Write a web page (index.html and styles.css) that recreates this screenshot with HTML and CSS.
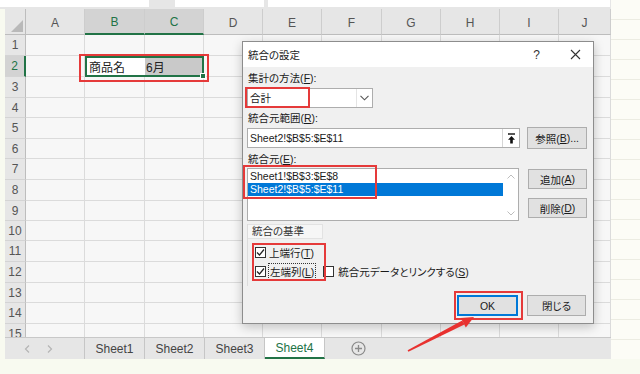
FILE: index.html
```html
<!DOCTYPE html>
<html lang="ja">
<head>
    <meta charset="UTF-8">
    <title>統合の設定</title>
    <link rel="stylesheet" href="styles.css">
</head>
<body>
<div class="page">
    <div class="excel">
        <div class="formula-bar">
            <div class="fbox name-box"></div>
            <div class="fbox mid-box"></div>
            <div class="fbox input-box"></div>
        </div>

        <div class="sheet">
            <div class="ch corner"></div><div class="ch">A</div><div class="ch on">B</div><div class="ch on">C</div><div class="ch">D</div><div class="ch">E</div><div class="ch">F</div><div class="ch">G</div><div class="ch">H</div><div class="ch">I</div><div class="ch">J</div>
            <div class="rh">1</div><div class="c"></div><div class="c"></div><div class="c"></div><div class="c"></div><div class="c"></div><div class="c"></div><div class="c"></div><div class="c"></div><div class="c"></div><div class="c"></div>
            <div class="rh on">2</div><div class="c"></div><div class="c active">商品名</div><div class="c range">6月<span class="handle"></span></div><div class="c"></div><div class="c"></div><div class="c"></div><div class="c"></div><div class="c"></div><div class="c"></div><div class="c"></div>
            <div class="rh">3</div><div class="c"></div><div class="c"></div><div class="c"></div><div class="c"></div><div class="c"></div><div class="c"></div><div class="c"></div><div class="c"></div><div class="c"></div><div class="c"></div>
            <div class="rh">4</div><div class="c"></div><div class="c"></div><div class="c"></div><div class="c"></div><div class="c"></div><div class="c"></div><div class="c"></div><div class="c"></div><div class="c"></div><div class="c"></div>
            <div class="rh">5</div><div class="c"></div><div class="c"></div><div class="c"></div><div class="c"></div><div class="c"></div><div class="c"></div><div class="c"></div><div class="c"></div><div class="c"></div><div class="c"></div>
            <div class="rh">6</div><div class="c"></div><div class="c"></div><div class="c"></div><div class="c"></div><div class="c"></div><div class="c"></div><div class="c"></div><div class="c"></div><div class="c"></div><div class="c"></div>
            <div class="rh">7</div><div class="c"></div><div class="c"></div><div class="c"></div><div class="c"></div><div class="c"></div><div class="c"></div><div class="c"></div><div class="c"></div><div class="c"></div><div class="c"></div>
            <div class="rh">8</div><div class="c"></div><div class="c"></div><div class="c"></div><div class="c"></div><div class="c"></div><div class="c"></div><div class="c"></div><div class="c"></div><div class="c"></div><div class="c"></div>
            <div class="rh">9</div><div class="c"></div><div class="c"></div><div class="c"></div><div class="c"></div><div class="c"></div><div class="c"></div><div class="c"></div><div class="c"></div><div class="c"></div><div class="c"></div>
            <div class="rh">10</div><div class="c"></div><div class="c"></div><div class="c"></div><div class="c"></div><div class="c"></div><div class="c"></div><div class="c"></div><div class="c"></div><div class="c"></div><div class="c"></div>
            <div class="rh">11</div><div class="c"></div><div class="c"></div><div class="c"></div><div class="c"></div><div class="c"></div><div class="c"></div><div class="c"></div><div class="c"></div><div class="c"></div><div class="c"></div>
            <div class="rh">12</div><div class="c"></div><div class="c"></div><div class="c"></div><div class="c"></div><div class="c"></div><div class="c"></div><div class="c"></div><div class="c"></div><div class="c"></div><div class="c"></div>
            <div class="rh">13</div><div class="c"></div><div class="c"></div><div class="c"></div><div class="c"></div><div class="c"></div><div class="c"></div><div class="c"></div><div class="c"></div><div class="c"></div><div class="c"></div>
            <div class="rh">14</div><div class="c"></div><div class="c"></div><div class="c"></div><div class="c"></div><div class="c"></div><div class="c"></div><div class="c"></div><div class="c"></div><div class="c"></div><div class="c"></div>
            <div class="rh">15</div><div class="c"></div><div class="c"></div><div class="c"></div><div class="c"></div><div class="c"></div><div class="c"></div><div class="c"></div><div class="c"></div><div class="c"></div><div class="c"></div>
        </div>

        <div class="tabbar">
            <div class="tab-nav">
                <svg width="6" height="8" viewBox="0 0 6 8"><path d="M5 0.5 L1.5 4 L5 7.5" fill="none" stroke="#b5b5b5" stroke-width="1.2"/></svg>
                <svg width="6" height="8" viewBox="0 0 6 8"><path d="M1 0.5 L4.5 4 L1 7.5" fill="none" stroke="#b5b5b5" stroke-width="1.2"/></svg>
            </div>
            <div class="tab">Sheet1</div>
            <div class="tab">Sheet2</div>
            <div class="tab">Sheet3</div>
            <div class="tab active">Sheet4</div>
            <div class="tab-add">
                <svg width="15" height="15" viewBox="0 0 15 15"><circle cx="7.5" cy="7.5" r="6.5" fill="none" stroke="#8a8a8a" stroke-width="1.2"/><path d="M7.5 4 V11 M4 7.5 H11" stroke="#8a8a8a" stroke-width="1.3"/></svg>
            </div>
        </div>
    </div>
    <div class="filler"></div>

    <!-- 統合の設定 dialog -->
    <div class="dialog">
        <div class="dlg-title">
            <span>統合の設定</span>
            <span class="help">?</span>
            <span class="close"><svg width="11" height="11" viewBox="0 0 11 11"><path d="M1 1 L10 10 M10 1 L1 10" stroke="#333" stroke-width="1.1"/></svg></span>
        </div>
        <div class="dlg-body">
            <div class="label first">集計の方法(<u>F</u>):</div>
            <div class="combo">
                <span class="combo-value">合計</span>
                <span class="combo-drop"><svg width="9" height="6" viewBox="0 0 9 6"><path d="M0.5 0.8 L4.5 4.8 L8.5 0.8" fill="none" stroke="#555" stroke-width="1.1"/></svg></span>
            </div>

            <div class="label">統合元範囲(<u>R</u>):</div>
            <div class="range-row">
                <div class="ref-input">
                    <span class="ref-text">Sheet2!$B$5:$E$11</span>
                    <span class="collapse"><svg width="9" height="11" viewBox="0 0 9 11"><path d="M1 1 H8" stroke="#111" stroke-width="1.4"/><path d="M4.5 3 L8 6.8 H5.8 V10.5 H3.2 V6.8 H1 Z" fill="#111"/></svg></span>
                </div>
                <button class="btn wide">参照(<u>B</u>)...</button>
            </div>

            <div class="label">統合元(<u>E</u>):</div>
            <div class="list-row">
                <div class="listbox">
                    <div class="items">
                        <div class="item">Sheet1!$B$3:$E$8</div>
                        <div class="item sel">Sheet2!$B$5:$E$11</div>
                    </div>
                    <div class="vscroll">
                        <svg width="8" height="5" viewBox="0 0 8 5"><path d="M0.5 4.5 L4 1 L7.5 4.5" fill="none" stroke="#bdbdbd" stroke-width="1"/></svg>
                        <svg width="8" height="5" viewBox="0 0 8 5"><path d="M0.5 0.5 L4 4 L7.5 0.5" fill="none" stroke="#bdbdbd" stroke-width="1"/></svg>
                    </div>
                </div>
                <div class="btn-col">
                    <button class="btn">追加(<u>A</u>)</button>
                    <button class="btn">削除(<u>D</u>)</button>
                </div>
            </div>

            <div class="group">
                <div class="group-title">統合の基準</div>
                <div class="chk-row">
                    <span class="chk">
                        <span class="box"><svg width="9" height="9" viewBox="0 0 9 9"><path d="M1 4.5 L3.5 7 L8 1.5" fill="none" stroke="#222" stroke-width="1.2"/></svg></span>
                        <span>上端行(<u>T</u>)</span>
                    </span>
                </div>
                <div class="chk-row">
                    <span class="chk">
                        <span class="box"><svg width="9" height="9" viewBox="0 0 9 9"><path d="M1 4.5 L3.5 7 L8 1.5" fill="none" stroke="#222" stroke-width="1.2"/></svg></span>
                        <span class="focus">左端列(<u>L</u>)</span>
                    </span>
                    <span class="chk link">
                        <span class="box"></span>
                        <span>統合元データとリンクする(<u>S</u>)</span>
                    </span>
                </div>
            </div>

            <div class="actions">
                <button class="btn ok">OK</button>
                <button class="btn">閉じる</button>
            </div>
        </div>
    </div>

    <!-- red annotations -->
    <div class="mark mark-cells"></div>
    <div class="mark mark-func"></div>
    <div class="mark mark-list"></div>
    <div class="mark mark-checks"></div>
    <div class="mark mark-ok"></div>
    <svg class="arrow" width="640" height="374" viewBox="0 0 640 374">
        <polygon points="407.6,350.3 408.4,351.7 464.4,324.6 462.2,320.4" fill="#e8312f"/>
        <polygon points="474,317 465.8,327.4 460.8,318" fill="#e8312f"/>
    </svg>
</div>
</body>
</html>
```

FILE: styles.css
```css
* {
    box-sizing: border-box;
}
body {
    margin: 0;
    width: 640px;
    height: 374px;
    overflow: hidden;
    background: #f8faf0;
    font-family: 'Liberation Sans', 'Noto Sans CJK JP', sans-serif;
    color: #222;
}
.page {
    position: relative;
    display: flex;
    height: 374px;
}
.excel {
    width: 611px;
    flex: none;
}
.filler {
    flex: 1;
    height: 359px;
    background: repeating-linear-gradient(to bottom, #fcfcf6 0, #fcfcf6 19px, #ececE2 19px, #ececE2 20px);
}

/* formula bar strip */
.formula-bar {
    height: 9px;
    background: #e6e6e6;
    display: flex;
}
.fbox {
    height: 7px;
    background: #fff;
}
.name-box {
    width: 149px;
    margin-right: 26px;
}
.mid-box {
    width: 89px;
    margin-right: 4px;
}
.input-box {
    flex: 1;
    margin-right: 1px;
}

/* grid */
.sheet {
    margin-left: 5px;
    display: grid;
    grid-template-columns: 21px 59px 60px 59px 59px 59px 60px 59px 59px 59px 52px;
    grid-template-rows: 26px 21px 21px 21px 20px 21px 20px 21px 21px 20px 20px 21px 21px 20px 21px 21px;
    height: 328px;
    overflow: hidden;
}
.ch {
    background: #e6e6e6;
    border-right: 1px solid #cdcdcd;
    border-bottom: 1px solid #bdbdbd;
    font-size: 12px;
    color: #555;
    display: flex;
    align-items: center;
    justify-content: center;
    padding-top: 2px;
}
.ch.on {
    background: #d3d3d3;
    color: #217346;
    border-bottom: 2px solid #217346;
}
.corner {
    position: relative;
    border-right: 1px solid #bdbdbd;
}
.corner::after {
    content: '';
    position: absolute;
    right: 2px;
    bottom: 2px;
    border-left: 12px solid transparent;
    border-bottom: 12px solid #b9b9b9;
}
.rh {
    background: #e6e6e6;
    border-right: 1px solid #bdbdbd;
    border-bottom: 1px solid #d4d4d4;
    font-size: 12px;
    color: #555;
    display: flex;
    align-items: center;
    justify-content: center;
}
.rh.on {
    background: #d3d3d3;
    color: #217346;
    border-right: 2px solid #217346;
}
.c {
    background: #f7f7f7;
    border-right: 1px solid #dbdbdb;
    border-bottom: 1px solid #dbdbdb;
    font-size: 12px;
    color: #222;
    display: flex;
    align-items: center;
}
.c.active {
    background: #fff;
    border: 2px solid #217346;
    border-right: none;
    padding-left: 2px;
}
.c.range {
    position: relative;
    background: #c9c9c9;
    border: 2px solid #217346;
    border-left: none;
    padding-left: 1px;
}
.handle {
    position: absolute;
    right: -4px;
    bottom: -4px;
    width: 6px;
    height: 6px;
    background: #217346;
    border: 1px solid #fff;
}

/* sheet tabs */
.tabbar {
    margin-left: 5px;
    height: 22px;
    background: #e6e6e6;
    border-top: 1px solid #c8c8c8;
    display: flex;
    font-size: 12px;
    color: #444;
}
.tab-nav {
    width: 80px;
    display: flex;
    align-items: center;
    gap: 17px;
    padding-left: 19px;
    border-right: 1px solid #c6c6c6;
}
.tab {
    width: 60px;
    display: flex;
    align-items: center;
    justify-content: center;
    border-right: 1px solid #c6c6c6;
}
.tab:first-of-type {
    width: 61px;
}
.tab.active {
    background: #fff;
    color: #217346;
    border-bottom: 2px solid #217346;
}
.tab-add {
    margin-left: 26px;
    display: flex;
    align-items: center;
}

/* dialog */
.dialog {
    position: absolute;
    left: 242px;
    top: 41px;
    width: 352px;
    height: 283px;
    background: #f0f0f0;
    border: 1px solid #8d8d8d;
    box-shadow: 0 3px 10px rgba(0, 0, 0, 0.22);
    font-size: 10.5px;
    font-feature-settings: "palt";
    color: #1a1a1a;
    display: flex;
    flex-direction: column;
}
.dlg-title {
    height: 25px;
    background: #fff;
    display: flex;
    align-items: center;
    padding-left: 5px;
}
.help {
    margin-left: auto;
    font-size: 12px;
    color: #333;
}
.close {
    margin-left: 30px;
    margin-right: 12px;
    display: flex;
}
.dlg-body {
    flex: 1;
    display: flex;
    flex-direction: column;
    padding: 4px 6px 7px 4px;
}
.label {
    line-height: 14px;
    padding-left: 1px;
    margin-top: 3px;
}
.label.first {
    margin-top: 0;
}
.combo {
    margin-top: 3px;
    width: 126px;
    height: 20px;
    background: #fff;
    border: 1px solid #adadad;
    display: flex;
}
.combo-value {
    flex: 1;
    line-height: 18px;
    padding-left: 2px;
}
.combo-drop {
    width: 16px;
    border-left: 1px solid #e4e4e4;
    display: flex;
    align-items: center;
    justify-content: center;
}
.range-row {
    margin-top: 2px;
    display: flex;
    align-items: center;
    gap: 7px;
}
.ref-input {
    width: 274px;
    height: 20px;
    background: #fff;
    border: 1px solid #adadad;
    display: flex;
    align-items: center;
}
.ref-text {
    flex: 1;
    padding-left: 2px;
}
.collapse {
    width: 17px;
    height: 18px;
    border-left: 1px solid #d6d6d6;
    display: flex;
    align-items: center;
    justify-content: center;
}
.btn {
    width: 59px;
    height: 20px;
    padding: 0;
    background: #e1e1e1;
    border: 1px solid #adadad;
    font: inherit;
    color: #1a1a1a;
    display: flex;
    align-items: center;
    justify-content: center;
}
.btn.wide {
    width: 60px;
    height: 22px;
}
.list-row {
    margin-top: 2px;
    display: flex;
    gap: 9px;
}
.listbox {
    width: 272px;
    height: 53px;
    background: #fff;
    border: 1px solid #adadad;
    display: flex;
}
.items {
    flex: 1;
    padding-top: 1px;
}
.item {
    height: 13px;
    line-height: 13px;
    padding-left: 2px;
}
.item.sel {
    background: #0078d7;
    color: #fff;
}
.vscroll {
    width: 15px;
    padding: 5px 0 4px;
    display: flex;
    flex-direction: column;
    justify-content: space-between;
    align-items: center;
}
.btn-col {
    padding-top: 1px;
    display: flex;
    flex-direction: column;
    gap: 9px;
}
.group {
    margin-top: 3px;
    align-self: flex-start;
    border-left: 1px solid #dcdcdc;
    padding-bottom: 6px;
    white-space: nowrap;
}
.group-title {
    width: 75px;
    line-height: 13px;
    padding-left: 4px;
    background: #f6f6f6;
    border: 1px solid #e2e2e2;
    border-left: none;
    color: #333;
}
.chk-row {
    margin-top: 5px;
    height: 17px;
    display: flex;
    align-items: center;
    gap: 8px;
    padding-left: 7px;
}
.chk-row + .chk-row {
    margin-top: 2px;
}
.chk {
    display: flex;
    align-items: center;
    gap: 3px;
}
.box {
    width: 11px;
    height: 11px;
    background: #fff;
    border: 1px solid #333;
    display: flex;
    align-items: center;
    justify-content: center;
}
.focus {
    outline: 1px dotted #333;
    padding: 0 1px;
}
.chk.link {
    gap: 4px;
}
.actions {
    margin-top: auto;
    display: flex;
    justify-content: flex-end;
    gap: 9px;
    padding-right: 1px;
}
.btn.ok {
    width: 61px;
    height: 21px;
    border: 1px solid #0078d7;
    box-shadow: inset 0 0 0 1px #0078d7;
}
.actions .btn {
    height: 21px;
}

/* red annotations */
.mark {
    position: absolute;
    border: 2px solid #e53a3a;
}
.mark-cells {
    left: 79px;
    top: 54px;
    width: 130px;
    height: 28px;
}
.mark-func {
    left: 245px;
    top: 87px;
    width: 65px;
    height: 21px;
}
.mark-list {
    left: 243px;
    top: 165px;
    width: 134px;
    height: 34px;
}
.mark-checks {
    left: 252px;
    top: 243px;
    width: 74px;
    height: 38px;
}
.mark-ok {
    left: 454px;
    top: 291px;
    width: 69px;
    height: 29px;
}
.arrow {
    position: absolute;
    left: 0;
    top: 0;
    pointer-events: none;
}
```
